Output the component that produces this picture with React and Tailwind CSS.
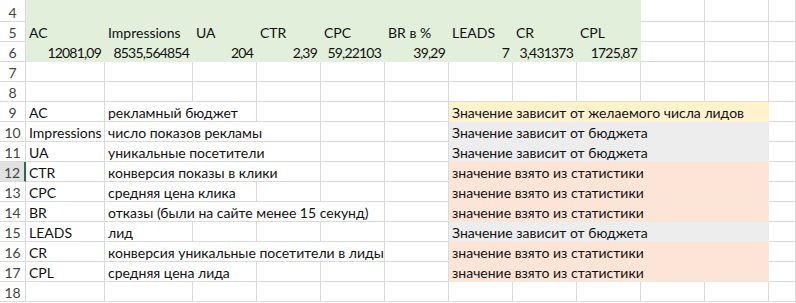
import React from "react";

const GRID = "grid grid-cols-[26px_79px_88px_repeat(9,64px)_1fr]";
const SPAN = {
  1: "col-span-1",
  2: "col-span-2",
  3: "col-span-3",
  4: "col-span-4",
  5: "col-span-5",
  9: "col-span-9",
};

const FILLS = {
  none: "bg-white border-[#dadada]",
  green: "bg-[#e2efda] border-[#e2efda]",
  yellow: "bg-[#fff2cc] border-[#fff2cc]",
  gray: "bg-[#ededed] border-[#ededed]",
  peach: "bg-[#fce4d6] border-[#fce4d6]",
};

const Cell = ({ text = "", right, fill = "none", span = 1 }) => (
  <div
    className={`${SPAN[span]} ${FILLS[fill]} flex items-end border-r border-b whitespace-nowrap overflow-visible ${
      right ? "justify-end pr-[3px] tracking-[-0.8px]" : "pl-[3px]"
    }`}
  >
    <span className="relative z-10">{text}</span>
  </div>
);

const Row = ({ n, h = "h-[20px]", selected, children }) => (
  <div className={`${GRID} ${h}`}>
    <div
      className={`flex items-end justify-center border-b border-[#dadada] text-[#444] ${
        selected
          ? "bg-[#e1e1e1] border-r-2 border-r-[#217346]"
          : "bg-white border-r"
      }`}
    >
      {n}
    </div>
    {children}
  </div>
);

const heads = ["AC", "Impressions", "UA", "CTR", "CPC", "BR в %", "LEADS", "CR", "CPL"];
const values = ["12081,09", "8535,564854", "204", "2,39", "59,22103", "39,29", "7", "3,431373", "1725,87"];

const notes = [
  [9, "AC", "рекламный бюджет", 2, "yellow", "Значение зависит от желаемого числа лидов"],
  [10, "Impressions", "число показов рекламы", 3, "gray", "Значение зависит от бюджета"],
  [11, "UA", "уникальные посетители", 3, "gray", "Значение зависит от бюджета"],
  [12, "CTR", "конверсия показы в клики", 3, "peach", "значение взято из статистики"],
  [13, "CPC", "средняя цена клика", 2, "peach", "значение взято из статистики"],
  [14, "BR", "отказы (были на сайте менее 15 секунд)", 4, "peach", "значение взято из статистики"],
  [15, "LEADS", "лид", 1, "gray", "Значение зависит от бюджета"],
  [16, "CR", "конверсия уникальные посетители в лиды", 4, "peach", "значение взято из статистики"],
  [17, "CPL", "средняя цена лида", 2, "peach", "значение взято из статистики"],
];

const Empty = ({ count }) =>
  Array.from({ length: count }, (_, i) => <Cell key={"e" + i} />);

export default function App() {
  return (
    <div className="w-[796px] h-[303px] overflow-hidden bg-white text-[#111] text-[14px] leading-4 font-['Lato','Open_Sans',sans-serif]">
      <Row n={4} h="h-[22px]">
        <Cell fill="green" span={9} />
        <Empty count={3} />
      </Row>
      <Row n={5}>
        {heads.map((t) => (
          <Cell key={t} text={t} fill="green" />
        ))}
        <Empty count={3} />
      </Row>
      <Row n={6}>
        {values.map((t) => (
          <Cell key={t} text={t} right fill="green" />
        ))}
        <Empty count={3} />
      </Row>
      <Row n={7}>
        <Empty count={12} />
      </Row>
      <Row n={8}>
        <Empty count={12} />
      </Row>
      {notes.map(([n, key, desc, span, fill, note]) => (
        <Row key={n} n={n} selected={n === 12}>
          <Cell text={key} />
          <Cell text={desc} span={span} />
          <Empty count={5 - span} />
          <Cell text={note} fill={fill} span={5} />
          <Cell />
        </Row>
      ))}
      <Row n={18}>
        <Empty count={12} />
      </Row>
    </div>
  );
}
